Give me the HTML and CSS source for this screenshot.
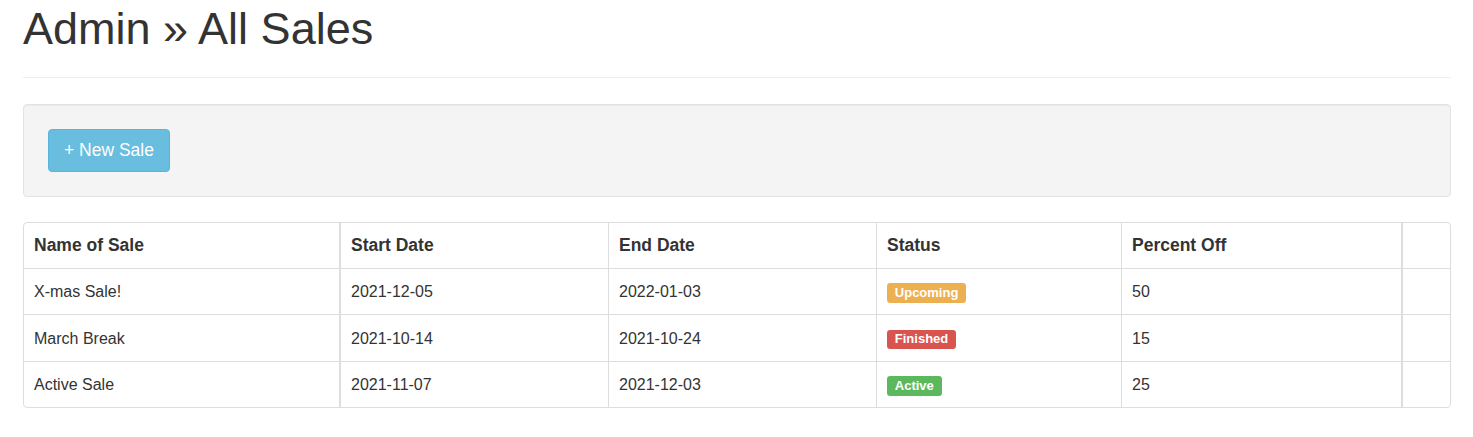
FILE: index.html
```html
<!DOCTYPE html>
<html lang="en">
<head>
    <meta charset="UTF-8">
    <title>Admin » All Sales</title>
    <link rel="stylesheet" href="styles.css">
</head>
<body>
    <div class="container">
        <!-- Page Header -->
        <div class="page-header">
            <h1>Admin » All Sales</h1>
        </div>

        <!-- Toolbar -->
        <div class="well">
            <button class="btn-info">+ New Sale</button>
        </div>

        <!-- Sales Table -->
        <div class="table-wrap">
            <table class="sales-table">
                <thead>
                    <tr>
                        <th class="col-name">Name of Sale</th>
                        <th class="col-start">Start Date</th>
                        <th class="col-end">End Date</th>
                        <th class="col-status">Status</th>
                        <th class="col-percent">Percent Off</th>
                        <th class="col-actions"></th>
                    </tr>
                </thead>
                <tbody>
                    <tr>
                        <td>X-mas Sale!</td>
                        <td class="thick">2021-12-05</td>
                        <td>2022-01-03</td>
                        <td><span class="label label-warning">Upcoming</span></td>
                        <td>50</td>
                        <td class="thick"></td>
                    </tr>
                    <tr>
                        <td>March Break</td>
                        <td class="thick">2021-10-14</td>
                        <td>2021-10-24</td>
                        <td><span class="label label-danger">Finished</span></td>
                        <td>15</td>
                        <td class="thick"></td>
                    </tr>
                    <tr>
                        <td>Active Sale</td>
                        <td class="thick">2021-11-07</td>
                        <td>2021-12-03</td>
                        <td><span class="label label-success">Active</span></td>
                        <td>25</td>
                        <td class="thick"></td>
                    </tr>
                </tbody>
            </table>
        </div>
    </div>
</body>
</html>
```

FILE: styles.css
```css
/* Global Styles */
* {
    box-sizing: border-box;
}

body {
    margin: 0;
    padding: 0;
    background-color: #fff;
    color: #333;
    font-family: "Liberation Sans", Arial, sans-serif;
    font-size: 16px;
}

.container {
    padding: 0 22px 0 23px;
}

/* Page Header */
.page-header {
    padding: 4px 0 23px;
    margin-bottom: 26px;
    border-bottom: 1px solid #eee;
}

.page-header h1 {
    margin: 0;
    font-size: 45px;
    font-weight: normal;
    line-height: 1.1;
}

/* Well */
.well {
    background-color: #f4f4f4;
    border: 1px solid #e3e3e3;
    border-radius: 4px;
    box-shadow: inset 0 1px 1px rgba(0, 0, 0, 0.05);
    padding: 24px;
    margin-bottom: 25px;
}

.btn-info {
    display: block;
    background-color: #69bddf;
    border: 1px solid #5ab4d9;
    border-radius: 4px;
    color: #fff;
    font-family: inherit;
    font-size: 17.5px;
    line-height: 25px;
    padding: 8px 15px;
    cursor: pointer;
}

/* Table */
.table-wrap {
    border: 1px solid #ddd;
    border-radius: 4px;
    overflow: hidden;
}

.sales-table {
    width: 100%;
    table-layout: fixed;
    border-collapse: separate;
    border-spacing: 0;
}

.sales-table th,
.sales-table td {
    padding: 11px 10px;
    line-height: 23px;
    text-align: left;
    vertical-align: middle;
    border-left: 1px solid #ddd;
    border-top: 1px solid #ddd;
}

.sales-table td {
    padding-top: 11.5px;
    padding-bottom: 11px;
}

.sales-table th {
    border-top: none;
    font-size: 17.5px;
    font-weight: bold;
}

.sales-table th:first-child,
.sales-table td:first-child {
    border-left: none;
}

.sales-table .thick,
.sales-table .col-start,
.sales-table .col-actions {
    border-left-width: 2px;
}

.col-name { width: 315px; }
.col-start { width: 269px; }
.col-end { width: 268px; }
.col-status { width: 245px; }
.col-percent { width: 280px; }

/* Labels */
.label {
    display: inline-block;
    padding: 0.2em 0.6em 0.3em;
    font-size: 13px;
    font-weight: bold;
    line-height: 1;
    color: #fff;
    border-radius: 0.25em;
    vertical-align: middle;
}

.label-warning { background-color: #edb051; }
.label-danger { background-color: #d9534f; }
.label-success { background-color: #5cb85c; }
```
